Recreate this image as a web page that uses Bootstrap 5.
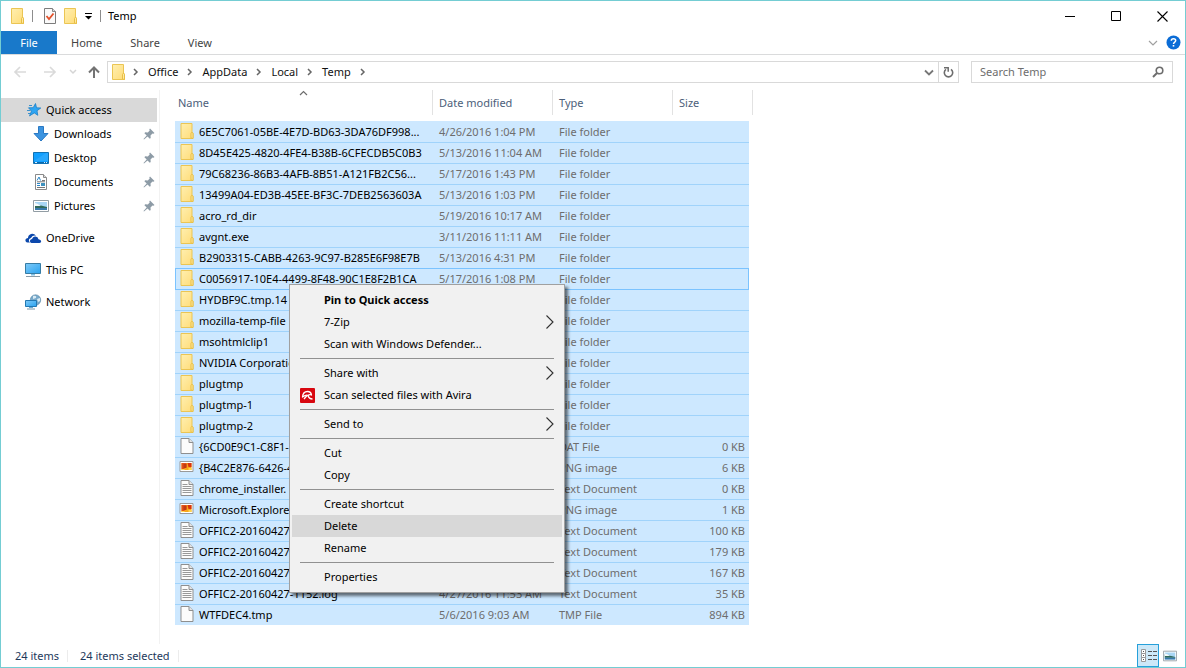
<!DOCTYPE html>
<html lang="en">
<head>
<meta charset="utf-8">
<meta name="viewport" content="width=device-width, initial-scale=1">
<title>Temp</title>
<link rel="stylesheet" href="https://cdn.jsdelivr.net/npm/bootstrap@5.3.0/dist/css/bootstrap.min.css">
<style>
body{font-family:"Noto Sans","Open Sans",sans-serif;font-size:11px;line-height:16px;color:#000;background:#fff}
svg{display:block;flex:none}
button{font:inherit;color:inherit;background:none;border:0;padding:0}
a{color:inherit;text-decoration:none}
.explorer{min-height:100vh;border:1px solid #74cdd3}
.titlebar{height:30px;padding-left:9px}
.quick{gap:7px}
.vline{width:1px;height:12px;background:#8d8d8d}
.win-btn{width:46px;height:29px;display:flex;align-items:center;justify-content:center}
.ribbon{height:24px;border-bottom:1px solid #dadbdc;color:#444}
.ribbon-tab{padding:0 14px;height:23px}
.ribbon-file{width:56px;padding:0;background:#1979ca;color:#fff}
.locbar{height:31px;padding:3px 12px 0;color:#111}
.up-btn{padding:0 6px 0 10px}
.field{height:22px;border:1px solid #d9d9d9}
.crumbs{margin:0;padding:0 0 0 6px;gap:9px;list-style:none}
.reload{border-left:1px solid #d9d9d9}
.search{width:202px;margin-left:12px}
.search input{border:0;outline:0;padding:0 0 0 8px;min-width:0;color:#6d6d6d;background:none}
.search input::placeholder{color:#6d6d6d;opacity:1}
.side{width:159px;border-right:1px solid #f2f2f2;margin-top:4px;padding-top:8px;padding-right:2px}
.side a{display:flex;align-items:center;height:24px;padding-left:24px}
.side .sub{padding:0 2px 0 32px}
.side .sub span{padding-left:5px}
.side .root{margin-top:8px}
.side .on{background:#d9d9d9}
.files{width:574px;margin:4px 0 0 15px;table-layout:fixed;border-collapse:separate;border-spacing:0}
.files th{padding:0;font-weight:400;color:#4c607a;vertical-align:top;height:31px}
.files th>div{height:25px;line-height:25px;border-right:1px solid #e2e2e2;padding-left:6px;position:relative}
.files th:first-child>div{padding-left:3px}
.files th:last-child>div{width:80px}
.sort{position:absolute;left:50%;top:0;margin-left:-5px}
.files td{height:21px;line-height:16px;padding:0 4px 0 6px;background:#cde8ff;border-top:1px solid #a0d3fb;color:#6d6d6d;white-space:nowrap;overflow:hidden;vertical-align:middle}
.files tbody tr:first-child td{border-top-color:#cde8ff}
.files td:first-child{color:#000;padding:0 0 0 4px;overflow:visible}
.files td:last-child{text-align:right}
.fname{display:flex;align-items:center;gap:4px}
.fname svg{margin-bottom:2px}
.files tr.cur td,.files tr.cur + tr td{border-top-color:#7bc3ff}
.files tr.cur td:first-child{box-shadow:inset 1px 0 #7bc3ff}
.files tr.cur td:last-child{box-shadow:inset -1px 0 #7bc3ff}
.ctx{position:absolute;left:129px;top:198px;width:276px;padding:4px 2px;margin:0;list-style:none;background:#f1f1f1;border:1px solid #a0a0a0;box-shadow:3px 3px 3px rgba(0,0,0,.55);color:#000}
.ctx button{display:flex;align-items:center;width:100%;height:22px;padding:0 8px;text-align:left}
.ctx button>i{width:24px}
.ctx .hot{background:#d8d8d8}
.ctx hr{margin:3px 8px;border:0;height:1px;background:#919191;opacity:1}
.status{height:23px;color:#1e395b;padding:0 8px 0 14px}
.sline{width:1px;height:12px;background:#ececec}
.view-btn{height:23px;display:flex;align-items:center;justify-content:center}
.view-on{width:22px;border:1px solid #26a0da;background:#cce8f8}
</style>
</head>
<body>
<svg width="0" height="0" class="position-absolute" aria-hidden="true">
<defs>
<linearGradient id="gf" x1="0" y1="0" x2="1" y2="1"><stop offset="0" stop-color="#ffefb0"/><stop offset="1" stop-color="#ffdc78"/></linearGradient>
<linearGradient id="gb" x1="0" y1="0" x2="1" y2="1"><stop offset="0" stop-color="#7fcaf8"/><stop offset="1" stop-color="#2aa3f0"/></linearGradient>
<symbol id="folder" viewBox="0 0 15 16"><path d="M1.500.500h11v9.500h1v5.500h-12z" fill="url(#gf)" stroke="#ebc553"/><path d="M11.500 15v-4.500q0-1 1-1t1 1v5z" fill="#ffeaa0" stroke="#e8be45"/></symbol>
<symbol id="page" viewBox="0 0 15 16"><path d="M1.500.500h8l4 4v11h-12z" fill="#fcfcfc" stroke="#8f8f8f"/><path d="M9.500.500v4h4" fill="#e4e4e4" stroke="#8f8f8f"/></symbol>
<symbol id="text" viewBox="0 0 15 16"><path d="M1.500.500h8l4 4v11h-12z" fill="#fcfcfc" stroke="#8f8f8f"/><path d="M9.500.500v4h4" fill="#e4e4e4" stroke="#8f8f8f"/><path d="M3 4.500h5M3 6.500h9M3 8.500h9M3 10.500h9M3 12.500h9" stroke="#999"/></symbol>
<symbol id="png" viewBox="0 0 15 16"><path d="M.500 2.500h13v10h-13z" fill="#fff" stroke="#999"/><path d="M2 4h10v7h-10z" fill="#f9a51b"/><path d="M2 4h5v4h-2v2h-3z" fill="#e0501a"/><path d="M4 5h3v4h-3z" fill="#c23a14"/><path d="M8 4h4v4h-3z" fill="#d9330e"/><path d="M2 10h3v1h-3zM9 9h3v2h-3z" fill="#ffd54a"/></symbol>
<symbol id="crumb" viewBox="0 0 6 8"><path d="M1 1l3 3-3 3" fill="none" stroke="#666" stroke-width="1.500"/></symbol>
<symbol id="pin" viewBox="0 0 12 12"><path d="M7 .5l4.500 4.500-1 .8-1-.3-2 2 .2 2.500-.9.700-2.300-2.300L1 11.500l-.5-.5 3.200-3.500L1.400 5.200l.8-.9 2.600.2 1.900-2-.4-1z" fill="#8d9ba6"/></symbol>
<symbol id="more" viewBox="0 0 8 14"><path d="M.500.500l6.500 6.500-6.500 6.500" fill="none" stroke="#303030" stroke-width="1.100"/></symbol>
<symbol id="picture" viewBox="0 0 16 16"><path d="M.500 2.500h15v11h-15z" fill="#fff" stroke="#929da4"/><path d="M2 4h12v8h-12z" fill="#a9d6f5"/><path d="M2 6l4 1 8 2v1h-12z" fill="#316a5a"/><path d="M2 5l3 1 3 2h-6z" fill="#f4fafc"/><path d="M2 10h12v2h-12z" fill="#3979ac"/></symbol>
</defs>
</svg>

<div class="explorer d-flex flex-column">
  <header class="titlebar d-flex align-items-center">
    <div class="quick d-flex align-items-center">
      <svg width="15" height="16"><use href="#folder"/></svg>
      <span class="vline"></span>
      <button class="ps-1" aria-label="Properties"><svg width="12" height="16" viewBox="0 0 12 16"><path d="M.500.500h8l3 3v12h-11z" fill="#fafafa" stroke="#7c7c7c"/><path d="M8.500.500v3h3" fill="#ddd" stroke="#888"/><path d="M2.500 8l2.500 3L9.500 5.500" fill="none" stroke="#e2512b" stroke-width="1.800"/></svg></button>
      <button aria-label="New folder"><svg width="15" height="16"><use href="#folder"/></svg></button>
      <button aria-label="Customize toolbar"><svg width="8" height="8" viewBox="0 0 8 8"><path d="M0 1.500h7" stroke="#000"/><path d="M0 4h7l-3.500 3.500z"/></svg></button>
      <span class="vline"></span>
      <span>Temp</span>
    </div>
    <div class="d-flex ms-auto">
      <button class="win-btn" aria-label="Minimize"><svg width="11" height="11"><path d="M0 5.500h10" stroke="#000"/></svg></button>
      <button class="win-btn" aria-label="Maximize"><svg width="11" height="11"><path d="M.500.500h9v9h-9z" fill="none" stroke="#000"/></svg></button>
      <button class="win-btn" aria-label="Close"><svg width="11" height="11"><path d="M.500.500l10 10M10.500.500l-10 10" stroke="#000" stroke-width="1.100"/></svg></button>
    </div>
  </header>

  <nav class="ribbon d-flex">
    <button class="ribbon-tab ribbon-file">File</button>
    <button class="ribbon-tab">Home</button>
    <button class="ribbon-tab">Share</button>
    <button class="ribbon-tab">View</button>
    <div class="d-flex align-items-center gap-2 ms-auto pe-1">
      <button aria-label="Expand the ribbon"><svg width="10" height="6"><path d="M1 1l4 4 4-4" fill="none" stroke="#a0a0a0" stroke-width="1.200"/></svg></button>
      <button aria-label="Help"><svg width="15" height="15" viewBox="0 0 15 15"><circle cx="7.500" cy="7.500" r="7" fill="#0a6cd6"/><path d="M5.300 5.700q0-2 2.200-2t2.200 1.900q0 1-1.200 1.700-1 .6-1 1.700" fill="none" stroke="#fff" stroke-width="1.500"/><path d="M6.700 10h1.600v1.600h-1.600z" fill="#fff"/></svg></button>
    </div>
  </nav>

  <div class="locbar d-flex align-items-center">
    <div class="d-flex align-items-center">
      <button class="pe-3" aria-label="Back"><svg width="14" height="12"><path d="M13 6H2M7 1L2 6l5 5" fill="none" stroke="#dadada" stroke-width="1.700"/></svg></button>
      <button class="pe-2" aria-label="Forward"><svg width="14" height="12"><path d="M1 6h11M7 1l5 5-5 5" fill="none" stroke="#dadada" stroke-width="1.700"/></svg></button>
      <button class="ps-1" aria-label="Recent locations"><svg width="8" height="6"><path d="M1 1l3 3 3-3" fill="none" stroke="#d5d5d5" stroke-width="1.500"/></svg></button>
      <button class="up-btn" aria-label="Up"><svg width="14" height="12"><path d="M7 12V2M2 6.500L7 1.500l5 5" fill="none" stroke="#737373" stroke-width="2"/></svg></button>
    </div>
    <div class="field d-flex align-items-center flex-fill">
      <svg class="ms-1" width="15" height="16" viewBox="1 0 15 16"><use href="#folder" width="15" height="16"/></svg>
      <ol class="crumbs d-flex align-items-center">
        <li><svg width="6" height="8"><use href="#crumb"/></svg></li>
        <li><a href="#">Office</a></li>
        <li><svg width="6" height="8"><use href="#crumb"/></svg></li>
        <li><a href="#">AppData</a></li>
        <li><svg width="6" height="8"><use href="#crumb"/></svg></li>
        <li><a href="#">Local</a></li>
        <li><svg width="6" height="8"><use href="#crumb"/></svg></li>
        <li><a href="#">Temp</a></li>
        <li><svg width="6" height="8"><use href="#crumb"/></svg></li>
      </ol>
      <button class="ms-auto px-1" aria-label="Previous locations"><svg width="10" height="7"><path d="M1 1.500l4 4 4-4" fill="none" stroke="#777" stroke-width="1.800"/></svg></button>
      <button class="reload px-1 h-100" aria-label="Refresh"><svg width="11" height="12" viewBox="0 0 11 12"><path d="M8 3.300A4.200 4.200 0 1 1 3 3.300" fill="none" stroke="#6d6d6d" stroke-width="1.600"/><path d="M1 1.700h4.200v4" fill="none" stroke="#6d6d6d" stroke-width="1.500"/></svg></button>
    </div>
    <div class="field search d-flex align-items-center">
      <input class="flex-fill" type="text" placeholder="Search Temp" aria-label="Search Temp">
      <button class="px-2" aria-label="Search"><svg width="12" height="12" viewBox="0 0 12 12"><circle cx="7.500" cy="4.500" r="3.300" fill="none" stroke="#6d6d6d" stroke-width="1.600"/><path d="M5 7L1 11" stroke="#6d6d6d" stroke-width="2"/></svg></button>
    </div>
  </div>

  <div class="d-flex flex-fill">
    <nav class="side flex-shrink-0">
      <a class="on" href="#"><svg width="17" height="16" viewBox="0 0 17 16"><path d="M10.500 1.500l1 4.300 4.300.2-3.800 2.700.8 4.600-3.500-2.400-4.800 3 2-4.800L3.500 5.800l4.700-.1z" fill="#2fa5f2" stroke="#1b7fc6" stroke-width=".8"/><path d="M4 3.500h3M2 8.500h3.500M3 11.500h2" stroke="#3c91cc"/></svg><span class="ps-1">Quick access</span></a>
      <a class="sub" href="#"><svg width="16" height="16"><path d="M5.500.500h5v7h4.500L8 15 1 7.500h4.500z" fill="#3c94e0" stroke="#2a79c4"/></svg><span class="me-auto">Downloads</span><svg width="12" height="12"><use href="#pin"/></svg></a>
      <a class="sub" href="#"><svg width="16" height="16"><path d="M.500 2.500h15v11h-15z" fill="#12a0ff" stroke="#1272b4"/><path d="M1 11l12-8h2v8z" fill="#39adfd" opacity=".6"/><path d="M1 12.500h14" stroke="#0b68ab"/><path d="M2 12.500h2M11 12.500h1M13 12.500h1" stroke="#d8f0ff"/></svg><span class="me-auto">Desktop</span><svg width="12" height="12"><use href="#pin"/></svg></a>
      <a class="sub" href="#"><svg width="16" height="16"><path d="M2.500.500h8l3 3v12h-11z" fill="#fff" stroke="#8a8a8a"/><path d="M10.500.500v3h3" fill="#ddd" stroke="#8a8a8a"/><path d="M4 6.500L6 3l1.500 3.500M4 9.500h3M4 11.500h3" fill="none" stroke="#2b88c9"/><path d="M9 6.500h3M4 7.800h8M4 13.500h8" stroke="#777"/><path d="M8 9h4v3h-4z" fill="#3d91be"/></svg><span class="me-auto">Documents</span><svg width="12" height="12"><use href="#pin"/></svg></a>
      <a class="sub" href="#"><svg width="16" height="16"><use href="#picture"/></svg><span class="me-auto">Pictures</span><svg width="12" height="12"><use href="#pin"/></svg></a>
      <a class="root" href="#"><svg width="17" height="16" viewBox="0 0 17 16"><path d="M5 12.500H2.500Q0 12 .5 9.500 1 8 3 8q0-3 3-4 3-.8 5 1.700Q7.500 5 6 8q-2.500.5-2 3.300z" fill="#0c48ac"/><path d="M6.500 13Q4.500 12.500 5 10.500q.5-1.500 2-1.500.8-2.800 3.500-2.500 2.500 0 3 2.700 2.500.3 2.700 2.100 0 1.700-1.700 1.700z" fill="#0c48ac"/></svg><span class="ps-1">OneDrive</span></a>
      <a class="root" href="#"><svg width="17" height="16" viewBox="0 0 17 16"><path d="M.500 1.500h15v10h-15z" fill="url(#gb)" stroke="#377ca4"/><path d="M6 12h4v1.500h-4z" fill="#7fbfe4"/><path d="M1 14.500h14" stroke="#8a9ba7"/></svg><span class="ps-1">This PC</span></a>
      <a class="root" href="#"><svg width="17" height="16" viewBox="0 0 17 16"><circle cx="10.500" cy="6" r="5.200" fill="#78a9ca" stroke="#5585a5" stroke-width=".6"/><path d="M8 2q4-1 3 2L8 5zM12 5l3-1v3l-2 1z" fill="#d9ebf4"/><path d="M.500 6.500h11v6h-11z" fill="url(#gb)" stroke="#2378b1"/><path d="M4 13h4v1h-4z" fill="#68acd5"/><path d="M2 15h8" stroke="#7896a8"/></svg><span class="ps-1">Network</span></a>
    </nav>

    <main class="position-relative flex-fill">
      <table class="files">
        <colgroup><col style="width:258px"><col style="width:120px"><col style="width:120px"><col style="width:76px"></colgroup>
        <thead><tr>
          <th scope="col"><div>Name<svg class="sort" width="9" height="6"><path d="M1 5l3.500-3.500L8 5" fill="none" stroke="#6d6d6d" stroke-width="1.200"/></svg></div></th>
          <th scope="col"><div>Date modified</div></th><th scope="col"><div>Type</div></th><th scope="col"><div>Size</div></th>
        </tr></thead>
        <tbody>
          <tr><td><div class="fname"><svg width="16" height="16"><use href="#folder"/></svg>6E5C7061-05BE-4E7D-BD63-3DA76DF998...</div></td><td>4/26/2016 1:04 PM</td><td>File folder</td><td></td></tr>
          <tr><td><div class="fname"><svg width="16" height="16"><use href="#folder"/></svg>8D45E425-4820-4FE4-B38B-6CFECDB5C0B3</div></td><td>5/13/2016 11:04 AM</td><td>File folder</td><td></td></tr>
          <tr><td><div class="fname"><svg width="16" height="16"><use href="#folder"/></svg>79C68236-86B3-4AFB-8B51-A121FB2C56...</div></td><td>5/17/2016 1:43 PM</td><td>File folder</td><td></td></tr>
          <tr><td><div class="fname"><svg width="16" height="16"><use href="#folder"/></svg>13499A04-ED3B-45EE-BF3C-7DEB2563603A</div></td><td>5/13/2016 1:03 PM</td><td>File folder</td><td></td></tr>
          <tr><td><div class="fname"><svg width="16" height="16"><use href="#folder"/></svg>acro_rd_dir</div></td><td>5/19/2016 10:17 AM</td><td>File folder</td><td></td></tr>
          <tr><td><div class="fname"><svg width="16" height="16"><use href="#folder"/></svg>avgnt.exe</div></td><td>3/11/2016 11:11 AM</td><td>File folder</td><td></td></tr>
          <tr><td><div class="fname"><svg width="16" height="16"><use href="#folder"/></svg>B2903315-CABB-4263-9C97-B285E6F98E7B</div></td><td>5/13/2016 4:31 PM</td><td>File folder</td><td></td></tr>
          <tr class="cur"><td><div class="fname"><svg width="16" height="16"><use href="#folder"/></svg>C0056917-10E4-4499-8F48-90C1E8F2B1CA</div></td><td>5/17/2016 1:08 PM</td><td>File folder</td><td></td></tr>
          <tr><td><div class="fname"><svg width="16" height="16"><use href="#folder"/></svg>HYDBF9C.tmp.14</div></td><td></td><td>File folder</td><td></td></tr>
          <tr><td><div class="fname"><svg width="16" height="16"><use href="#folder"/></svg>mozilla-temp-file</div></td><td></td><td>File folder</td><td></td></tr>
          <tr><td><div class="fname"><svg width="16" height="16"><use href="#folder"/></svg>msohtmlclip1</div></td><td></td><td>File folder</td><td></td></tr>
          <tr><td><div class="fname"><svg width="16" height="16"><use href="#folder"/></svg>NVIDIA Corporation</div></td><td></td><td>File folder</td><td></td></tr>
          <tr><td><div class="fname"><svg width="16" height="16"><use href="#folder"/></svg>plugtmp</div></td><td></td><td>File folder</td><td></td></tr>
          <tr><td><div class="fname"><svg width="16" height="16"><use href="#folder"/></svg>plugtmp-1</div></td><td></td><td>File folder</td><td></td></tr>
          <tr><td><div class="fname"><svg width="16" height="16"><use href="#folder"/></svg>plugtmp-2</div></td><td></td><td>File folder</td><td></td></tr>
          <tr><td><div class="fname"><svg width="16" height="16"><use href="#page"/></svg>{6CD0E9C1-C8F1-</div></td><td></td><td>DAT File</td><td>0 KB</td></tr>
          <tr><td><div class="fname"><svg width="16" height="16"><use href="#png"/></svg>{B4C2E876-6426-4</div></td><td></td><td>PNG image</td><td>6 KB</td></tr>
          <tr><td><div class="fname"><svg width="16" height="16"><use href="#text"/></svg>chrome_installer.</div></td><td></td><td>Text Document</td><td>0 KB</td></tr>
          <tr><td><div class="fname"><svg width="16" height="16"><use href="#png"/></svg>Microsoft.Explorer</div></td><td></td><td>PNG image</td><td>1 KB</td></tr>
          <tr><td><div class="fname"><svg width="16" height="16"><use href="#text"/></svg>OFFIC2-20160427-</div></td><td></td><td>Text Document</td><td>100 KB</td></tr>
          <tr><td><div class="fname"><svg width="16" height="16"><use href="#text"/></svg>OFFIC2-20160427-</div></td><td></td><td>Text Document</td><td>179 KB</td></tr>
          <tr><td><div class="fname"><svg width="16" height="16"><use href="#text"/></svg>OFFIC2-20160427-</div></td><td></td><td>Text Document</td><td>167 KB</td></tr>
          <tr><td><div class="fname"><svg width="16" height="16"><use href="#text"/></svg>OFFIC2-20160427-1152.log</div></td><td>4/27/2016 11:53 AM</td><td>Text Document</td><td>35 KB</td></tr>
          <tr><td><div class="fname"><svg width="16" height="16"><use href="#page"/></svg>WTFDEC4.tmp</div></td><td>5/6/2016 9:03 AM</td><td>TMP File</td><td>894 KB</td></tr>
        </tbody>
      </table>

      <ul class="ctx">
        <li><button class="fw-bold"><i></i>Pin to Quick access</button></li>
        <li><button><i></i>7-Zip<svg class="ms-auto" width="8" height="14"><use href="#more"/></svg></button></li>
        <li><button><i></i>Scan with Windows Defender...</button></li>
        <li><hr></li>
        <li><button><i></i>Share with<svg class="ms-auto" width="8" height="14"><use href="#more"/></svg></button></li>
        <li><button><i><svg width="15" height="15" viewBox="0 0 15 15"><rect width="15" height="15" rx="1" fill="#d8070f"/><path d="M2.500 9Q3 3.500 7.500 3.500 11 3.500 11.500 7 9.500 6 8 7.500 6 6.500 2.500 9z" fill="none" stroke="#fff" stroke-width="1.300" stroke-linejoin="round"/><path d="M8 7.500q1 3.500 4.500 3.500M7 7.500L4 11" fill="none" stroke="#fff" stroke-width="1.300"/></svg></i>Scan selected files with Avira</button></li>
        <li><hr></li>
        <li><button><i></i>Send to<svg class="ms-auto" width="8" height="14"><use href="#more"/></svg></button></li>
        <li><hr></li>
        <li><button><i></i>Cut</button></li>
        <li><button><i></i>Copy</button></li>
        <li><hr></li>
        <li><button><i></i>Create shortcut</button></li>
        <li><button class="hot"><i></i>Delete</button></li>
        <li><button><i></i>Rename</button></li>
        <li><hr></li>
        <li><button><i></i>Properties</button></li>
      </ul>
    </main>
  </div>

  <footer class="status d-flex align-items-center">
    <span>24 items</span><span class="sline mx-2"></span><span class="ps-1">24 items selected</span><span class="sline ms-2"></span>
    <div class="d-flex gap-1 ms-auto">
      <button class="view-btn view-on" aria-label="Details view"><svg width="17" height="14"><path d="M1.500.500h4v4h-4zM1.500 4.500h4v4h-4zM1.500 8.500h4v4h-4z" fill="#fff" stroke="#999"/><path d="M3 2.500h1M3 6.500h1M3 10.500h1M8 2.500h4M13 2.500h4M8 6.500h4M13 6.500h4M8 10.500h4M13 10.500h4" stroke="#555"/></svg></button>
      <button class="view-btn" aria-label="Thumbnail view"><svg width="14" height="14"><use href="#picture"/></svg></button>
    </div>
  </footer>
</div>
<script src="https://cdn.jsdelivr.net/npm/bootstrap@5.3.0/dist/js/bootstrap.bundle.min.js"></script>
</body>
</html>
